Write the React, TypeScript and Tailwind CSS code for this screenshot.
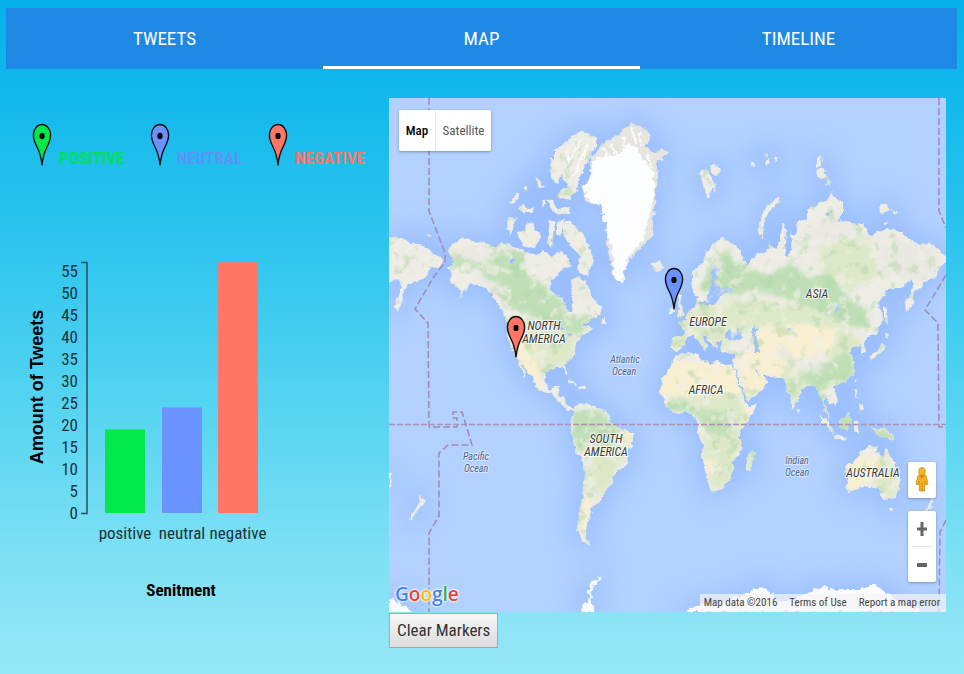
import React, { useState } from "react";

const condensed = "font-['Roboto_Condensed','Liberation_Sans_Narrow',Roboto,sans-serif]";

const LAND = [
  // North and Central America
  "M448 250 L454 243 L463 237 L472 241 L482 242 L493 247 L503 242 L510 246 L518 248 L528 253 L535 255 L542 250 L552 257 L557 252 L562 250 L568 258 L563 270 L552 280 L551 290 L557 296 L562 298 L565 305 L568 310 L572 313 L573 306 L571 298 L572 290 L571 279 L578 277 L587 282 L589 290 L592 297 L598 303 L603 310 L600 315 L590 320 L583 325 L592 328 L590 332 L580 337 L575 347 L576 353 L571 358 L565 365 L566 370 L568 375 L565 373 L563 367 L555 367 L547 372 L545 382 L550 390 L555 385 L560 385 L557 395 L565 397 L567 405 L572 408 L577 407 L583 403 L577 411 L568 410 L560 403 L552 394 L545 391 L535 387 L532 377 L526 370 L520 362 L523 369 L527 378 L522 372 L518 360 L515 357 L510 345 L507 333 L508 323 L503 312 L497 302 L493 295 L485 288 L472 283 L465 290 L453 302 L463 293 L457 287 L450 280 L453 273 L447 268 L453 262Z",
  "M600 320 L604 318 L607 324 L601 324Z M568 380 L577 384 L575 386 L568 382Z M579 386 L585 387 L584 390 L579 389Z",
  // South America
  "M575 405 L585 403 L597 407 L607 412 L612 422 L620 428 L633 433 L633 442 L628 452 L627 460 L625 467 L617 470 L612 482 L605 492 L603 498 L597 505 L590 508 L593 513 L587 523 L585 535 L590 545 L583 542 L577 530 L578 517 L582 500 L584 473 L582 457 L577 455 L572 437 L570 423 L573 413Z",
  // Arctic islands
  "M583 131 L596 138 L595 148 L587 163 L580 177 L577 190 L570 200 L558 197 L561 190 L567 187 L562 173 L559 185 L551 178 L550 157 L555 160 L555 150 L565 142 L573 134Z",
  "M517 233 L525 231 L526 225 L532 223 L536 230 L540 237 L535 248 L522 245Z M508 217 L518 218 L513 227 L511 235 L507 230Z",
  "M510 203 L514 196 L519 193 L518 199 L513 205Z M518 208 L524 204 L526 208 L534 207 L532 213 L523 213Z M535 177 L541 181 L545 187 L540 188Z M524 187 L528 185 L528 192 L524 191Z M546 198 L553 202 L557 209 L570 207 L569 214 L553 213Z M550 220 L555 219 L553 236 L551 249 L547 243Z M557 221 L564 220 L561 237 L557 234Z M541 200 L545 202 L543 208Z",
  "M562 222 L570 222 L582 233 L588 245 L595 260 L587 277 L577 270 L580 257 L570 245 L564 235Z M562 262 L568 258 L572 266 L565 268Z",
  // Iceland, Svalbard, Novaya Zemlya and the high Arctic
  "M652 263 L660 262 L664 267 L658 272 L653 269Z",
  "M700 172 L707 170 L711 178 L715 184 L708 198 L704 189Z M710 165 L716 164 L722 170 L716 176 L711 173Z M714 186 L717 192 L714 193Z",
  "M780 197 L777 204 L770 210 L764 221 L763 237 L758 235 L760 220 L765 208 L773 201Z",
  "M750 163 L755 160 L754 167Z M763 153 L768 152 L766 158Z M764 161 L769 159 L771 163 L765 165Z M774 158 L778 157 L775 163Z",
  "M816 158 L821 156 L822 166 L816 167Z M815 170 L824 168 L826 179 L819 180Z M827 177 L832 183 L830 187 L825 186Z M879 205 L888 205 L889 211 L880 213Z M891 209 L897 211 L894 214Z M884 221 L888 223 L884 224Z",
  // British Isles
  "M677 295 L682 296 L680 302 L685 313 L684 316 L676 317 L679 309Z M670 308 L674 306 L674 313 L669 313Z",
  // Eurasia
  "M672 337 L682 336 L685 332 L678 322 L685 320 L688 312 L695 308 L697 297 L692 289 L691 280 L693 273 L703 262 L706 252 L712 244 L723 238 L737 247 L743 257 L746 266 L752 260 L758 253 L767 250 L770 243 L777 250 L780 237 L783 223 L787 230 L786 246 L784 255 L788 257 L792 250 L790 233 L796 235 L798 222 L808 220 L808 210 L818 204 L827 200 L832 192 L835 198 L843 202 L843 215 L837 222 L848 221 L857 225 L863 223 L870 237 L883 230 L893 228 L908 238 L920 245 L930 243 L943 253 L947 257 L947 263 L938 267 L937 275 L923 283 L915 293 L913 303 L907 313 L905 303 L913 287 L912 278 L903 288 L887 290 L877 305 L882 308 L883 320 L875 335 L867 337 L865 343 L867 353 L862 355 L860 345 L853 347 L850 353 L855 362 L855 372 L848 380 L838 385 L832 385 L838 397 L835 407 L828 400 L825 395 L825 405 L830 420 L825 412 L823 403 L820 395 L813 385 L803 388 L797 402 L793 409 L788 393 L787 385 L782 378 L771 377 L761 375 L753 366 L757 373 L763 377 L768 381 L761 392 L748 401 L742 388 L736 371 L733 365 L734 353 L723 352 L719 347 L722 341 L716 342 L717 350 L710 342 L705 335 L700 333 L707 345 L705 351 L698 340 L693 335 L687 337 L682 348 L675 352 L671 348Z",
  // Africa and Madagascar
  "M677 355 L688 353 L698 353 L700 360 L710 364 L717 361 L727 365 L733 366 L740 387 L745 402 L748 407 L757 403 L753 413 L743 427 L739 437 L742 450 L733 462 L733 472 L728 482 L723 488 L712 492 L705 470 L701 457 L703 447 L698 433 L698 423 L692 413 L684 412 L677 415 L667 408 L660 393 L662 380 L670 367Z",
  "M753 449 L755 454 L750 471 L746 470 L746 459Z",
  // Japan and south-east Asia
  "M884 307 L887 309 L888 325 L884 320Z M884 332 L890 335 L885 339Z M882 342 L885 344 L882 353 L872 358 L870 362 L868 358 L879 350Z M854 378 L857 380 L855 383Z",
  "M855 390 L858 391 L857 399 L855 397Z M858 404 L863 405 L861 411Z M849 412 L852 419 L847 430 L840 427 L839 421Z M819 414 L825 419 L833 429 L834 435 L828 430Z M835 435 L846 438 L845 440 L835 438Z M854 422 L860 423 L857 427 L858 433 L854 432Z M870 426 L877 428 L885 428 L896 439 L882 438Z M797 408 L800 411 L798 414Z",
  // Australia and New Zealand
  "M845 467 L857 458 L860 452 L868 447 L877 448 L877 453 L883 457 L886 446 L890 457 L898 467 L901 483 L895 498 L885 500 L878 490 L872 487 L860 488 L848 493Z M889 507 L894 507 L892 512Z M932 497 L935 500 L931 506 L924 515 L922 513 L929 506Z",
  "M420 494 L425 501 L417 512 L411 521 L409 518 L418 506Z M388 472 L391 475 L390 486 L388 487Z",
  // Eastern Siberia, repeated over the date line
  "M388 237 L398 238 L412 243 L425 245 L432 252 L443 260 L438 268 L431 267 L427 277 L418 281 L410 283 L405 290 L402 303 L397 313 L394 307 L402 287 L398 278 L388 283Z M427 235 L432 234 L430 238Z",
].join(" ");

const ICE = "M597 158 L608 156 L618 154 L628 144 L641 152 L646 163 L654 174 L654 190 L652 204 L648 222 L643 240 L636 249 L627 261 L621 284 L614 277 L612 250 L605 223 L602 205 L590 200 L583 188 L590 179 L591 166Z";
const GREENLAND = "M597 150 L603 143 L612 140 L620 132 L632 123 L645 128 L651 140 L645 145 L653 152 L663 148 L667 153 L658 162 L657 173 L656 190 L655 207 L653 223 L652 238 L638 250 L627 263 L622 284 L613 277 L612 267 L608 250 L606 223 L602 205 L587 202 L582 187 L590 177 L590 160Z";
const ANTARCTICA =
  "M685 612 L695 606 L715 604 L735 598 L750 592 L760 586 L770 592 L778 601 L795 600 L810 590 L823 587 L840 590 L853 590 L865 588 L875 585 L885 591 L893 597 L905 605 L925 612Z M388 597 L395 600 L402 605 L412 612 L388 612Z M603 576 L596 582 L592 590 L590 600 L595 612 L582 612 L583 601 L588 604 L589 589 L594 579Z M938 612 L946 608 L946 612Z";

const INLAND_WATER =
  "M714 264 L720 268 L716 278 L719 287 L733 288 L733 291 L722 293 L717 303 L702 306 L699 301 L706 302 L710 290 L711 277Z M725 339 L728 329 L734 332 L738 329 L743 338 L734 341Z M752 329 L758 327 L756 335 L760 352 L754 352Z M834 310 L838 303 L839 306 L834 315Z M508 259 L514 257 L516 261 L510 264Z M556 323 L562 326 L566 331 L558 329Z M568 333 L574 334 L569 337Z M788 329 L792 328 L789 332Z M825 212 L832 211 L826 217Z M703 396 L706 398 L703 400Z M729 424 L733 424 L731 428Z";

const GREEN =
  "M450 250 L470 262 L492 262 L505 246 L522 255 L530 276 L560 296 L566 318 L595 316 L580 336 L545 322 L515 310 L495 292 L480 268 L458 265Z M572 410 L600 410 L618 428 L610 446 L588 440 L580 452 L572 437Z M700 290 L712 262 L728 248 L736 265 L750 268 L770 275 L790 262 L810 278 L830 272 L850 300 L868 310 L870 330 L845 325 L820 312 L790 300 L760 292 L725 295Z M695 410 L730 412 L732 436 L706 434Z M666 402 L688 401 L695 412 L668 411Z M848 352 L858 362 L852 380 L836 384 L820 392 L832 408 L826 416 L810 383 L800 380 L792 402 L788 382Z M838 412 L856 412 L850 434 L838 430Z M865 422 L900 438 L885 442Z M580 463 L587 470 L584 520 L576 530Z";
const PALE =
  "M505 318 L540 318 L575 334 L570 362 L545 372 L522 368 L510 345Z M600 440 L632 434 L622 466 L598 500 L588 480 L592 455Z M672 318 L700 306 L740 298 L800 305 L850 330 L862 345 L850 365 L800 345 L755 325 L722 350 L672 350Z M665 393 L745 395 L752 410 L740 430 L742 455 L728 485 L712 488 L702 455 L705 425Z M880 452 L902 480 L890 500 L872 482Z M770 380 L790 360 L812 375 L797 402Z M820 245 L868 235 L878 275 L850 290 L820 275Z M745 452 L757 450 L748 474Z";
const SAND =
  "M665 362 L730 362 L745 393 L700 397 L660 395Z M736 355 L760 350 L785 372 L765 395 L748 400Z M756 330 L800 322 L838 330 L830 352 L800 358 L770 372 L752 355Z M513 340 L535 345 L540 384 L524 374Z M745 405 L758 402 L744 428Z M583 490 L592 505 L588 535 L580 528Z M703 460 L715 458 L712 480Z M850 460 L880 456 L885 475 L860 484 L848 490Z M622 430 L632 432 L628 445Z M530 386 L545 388 L538 380Z";
const GREY =
  "M454 244 L500 250 L480 258 L455 254Z M470 272 L500 284 L510 310 L500 305Z M786 248 L850 205 L850 235 L815 250Z M780 342 L800 365 L818 366 L822 372 L800 370 L778 355Z M878 235 L940 250 L925 280 L880 275Z M560 270 L590 280 L590 300 L572 302Z";

function Pin({ x, y, color }: { x: number; y: number; color: string }) {
  return (
    <g transform={`translate(${x} ${y})`}>
      <path
        d="M0 0C-.8-8-2.4-13-5-18C-7-22-8.6-25-8.6-30A8.6 10.5 0 0 1 8.6-30C8.6-25 7-22 5-18C2.4-13 .8-8 0 0Z"
        fill={color}
        stroke="#111"
        strokeWidth="1.4"
        strokeLinejoin="round"
      />
      <ellipse cx="0" cy="-29" rx="2.6" ry="3.2" fill="#000" />
    </g>
  );
}

function WorldMap() {
  return (
    <svg
      viewBox="389 98 557 514"
      preserveAspectRatio="xMidYMid slice"
      className={`block h-full w-full ${condensed}`}
      role="img"
      aria-label="World map"
    >
      <defs>
        <clipPath id="land-clip">
          <path d={LAND} />
        </clipPath>
        <filter id="coast" x="389" y="98" width="557" height="514" filterUnits="userSpaceOnUse" colorInterpolationFilters="sRGB">
          <feTurbulence type="fractalNoise" baseFrequency="0.16" numOctaves="3" seed="4" result="n" />
          <feDisplacementMap in="SourceGraphic" in2="n" scale="6" xChannelSelector="R" yChannelSelector="G" result="d" />
          <feTurbulence type="fractalNoise" baseFrequency="0.08" numOctaves="5" seed="11" result="t" />
          <feColorMatrix in="t" values="0 0 0 0 .95  0 0 0 0 .94  0 0 0 0 .9  6 0 0 0 -3.3" result="pale" />
          <feColorMatrix in="t" values="0 0 0 0 .7  0 0 0 0 .84  0 0 0 0 .66  0 6 0 0 -3.4" result="leaf" />
          <feComponentTransfer in="leaf" result="leafSoft">
            <feFuncA type="linear" slope="0.5" />
          </feComponentTransfer>
          <feComposite in="leafSoft" in2="d" operator="atop" result="a" />
          <feComposite in="pale" in2="d" operator="in" result="b" />
          <feComponentTransfer in="b" result="b2">
            <feFuncA type="linear" slope="0.6" />
          </feComponentTransfer>
          <feMerge>
            <feMergeNode in="a" />
            <feMergeNode in="b2" />
          </feMerge>
        </filter>
        <filter id="ice" x="389" y="98" width="557" height="514" filterUnits="userSpaceOnUse" colorInterpolationFilters="sRGB">
          <feTurbulence type="fractalNoise" baseFrequency="0.18" numOctaves="2" seed="8" result="n" />
          <feDisplacementMap in="SourceGraphic" in2="n" scale="8" xChannelSelector="R" yChannelSelector="G" />
        </filter>
        <filter id="shelf" x="340" y="50" width="660" height="620" filterUnits="userSpaceOnUse" colorInterpolationFilters="sRGB">
          <feGaussianBlur stdDeviation="13" />
        </filter>
        <filter id="soft" colorInterpolationFilters="sRGB">
          <feGaussianBlur stdDeviation="2" />
        </filter>
      </defs>
      <rect x="0" y="0" width="1400" height="800" fill="#b2d1ff" />
      <g filter="url(#shelf)" fill="#8fb5fe" stroke="#8fb5fe" strokeWidth="12" opacity=".7">
        <path d={LAND} />
        <path d={GREENLAND} />
        <path d={ANTARCTICA} />
      </g>
      <g filter="url(#coast)">
        <path d={LAND} fill="#edece5" />
        <g clipPath="url(#land-clip)">
          <g filter="url(#soft)">
            <path d={PALE} fill="#dde8c8" />
            <path d={GREEN} fill="#c0dfb7" />
            <path d={SAND} fill="#f8efd0" />
            <path d={GREY} fill="#e9e8e1" />
          </g>
          <path d={INLAND_WATER} fill="#9dc0ff" />
        </g>
      </g>
      <g filter="url(#ice)">
        <path d={GREENLAND} fill="#e6e5df" />
        <path d={ICE} fill="#fcfdfe" />
        <path d={ANTARCTICA} fill="#fbfcfe" />
        <path
          d="M603 147L607 156M612 143L614 153M622 136L626 148M632 128L636 144M640 131L641 146M648 155L652 170M582 138L570 160M588 142L575 175M566 150L570 165"
          fill="none"
          stroke="#fafaf8"
          strokeWidth="2.5"
        />
      </g>
      <g fill="none" stroke="#a08bb2" strokeWidth="1.5">
        <path
          strokeDasharray="7 3"
          d="M429 98V211L445 253V262L433 278L415 309L428 323L429 427H457V418H453V412H462L472 445H448L439 453V516L429 533V612M939 98V211L946 228M946 275L925 310L938 323L939 427H946M946 520L940 532L939 612"
        />
        <path strokeDasharray="6 2" stroke="#ab93b0" d="M389 424.5H946" />
      </g>
      <g
        textAnchor="middle"
        fontStyle="italic"
        paintOrder="stroke"
        stroke="#fff"
        strokeOpacity=".75"
        strokeWidth="2"
        fill="#3a3a3a"
        className="text-[12px]"
      >
        <text x="544" y="330">NORTH</text>
        <text x="544" y="343">AMERICA</text>
        <text x="708" y="326">EUROPE</text>
        <text x="817" y="298">ASIA</text>
        <text x="706" y="394">AFRICA</text>
        <text x="606" y="443">SOUTH</text>
        <text x="606" y="456">AMERICA</text>
        <text x="873" y="477">AUSTRALIA</text>
      </g>
      <g
        textAnchor="middle"
        fontStyle="italic"
        paintOrder="stroke"
        stroke="#d5e5ff"
        strokeWidth="2"
        fill="#50658c"
        className="text-[10px]"
      >
        <text x="625" y="363">Atlantic</text>
        <text x="624" y="375">Ocean</text>
        <text x="476" y="460">Pacific</text>
        <text x="476" y="472">Ocean</text>
        <text x="797" y="464">Indian</text>
        <text x="797" y="476">Ocean</text>
      </g>
      <Pin x={516} y={357} color="#ff7566" />
      <Pin x={674} y={309} color="#6b93ff" />
    </svg>
  );
}

function MapPanel() {
  return (
    <div className="relative h-[514px] overflow-hidden">
      <WorldMap />
      <div className="absolute left-[10px] top-[12px] flex h-[41px] rounded-xs bg-white text-[13px] shadow-[0_1px_3px_rgba(0,0,0,0.3)]">
        <button className="w-[37px] border-r border-gray-200 font-medium text-black">Map</button>
        <button className="w-[55px] text-[#565656]">Satellite</button>
      </div>
      <button
        aria-label="Street View"
        className="absolute right-[10px] top-[364px] flex h-[36px] w-[28px] items-center justify-center rounded-xs bg-white shadow-[0_1px_3px_rgba(0,0,0,0.3)]"
      >
        <svg width="14" height="28" viewBox="0 0 14 28" aria-hidden="true">
          <path d="M3 9.500Q7 7.500 11 9.500L13 18L11 19L10 15L9.500 25H4.500L4 15L3 19L1 18Z" fill="#f5b021" stroke="#cf8a13" strokeWidth=".8" />
          <ellipse cx="7" cy="5.500" rx="3.300" ry="4" fill="#f9b824" stroke="#cf8a13" strokeWidth=".8" />
          <path d="M4.500 9.500L7 12.500L9.500 9.500Z" fill="#e8711c" />
          <path d="M7 17V25" stroke="#cf8a13" strokeWidth="1" />
        </svg>
      </button>
      <div className="absolute right-[10px] top-[413px] flex w-[28px] flex-col items-center rounded-xs bg-white shadow-[0_1px_3px_rgba(0,0,0,0.3)]">
        <button aria-label="Zoom in" className="flex h-[35px] w-full items-center justify-center">
          <svg width="12" height="14" viewBox="0 0 12 14" aria-hidden="true">
            <path d="M6 0V14M1 7H11" stroke="#666" strokeWidth="3" />
          </svg>
        </button>
        <div className="h-px w-[20px] bg-[#e6e6e6]" />
        <button aria-label="Zoom out" className="flex h-[35px] w-full items-center justify-center">
          <svg width="12" height="14" viewBox="0 0 12 14" aria-hidden="true">
            <path d="M1 7H11" stroke="#666" strokeWidth="4" />
          </svg>
        </button>
      </div>
      <div
        className="absolute bottom-[4px] left-[6px] font-['Open_Sans',sans-serif] text-[19px] leading-7 font-semibold [text-shadow:0_0_2px_#fff,0_0_2px_#fff,0_0_3px_#fff]"
        aria-label="Google"
      >
        <span className="text-[#4285f4]">G</span>
        <span className="text-[#ea4335]">o</span>
        <span className="text-[#fbbc05]">o</span>
        <span className="text-[#4285f4]">g</span>
        <span className="text-[#34a853]">l</span>
        <span className="text-[#ea4335]">e</span>
      </div>
      <div className="absolute bottom-0 right-0 flex h-[18px] items-center gap-3 bg-[#f5f5f5]/70 pl-1 pr-[6px] text-[11px] whitespace-nowrap text-[#444]">
        <span>Map data ©2016</span>
        <a href="#terms">Terms of Use</a>
        <a href="#report">Report a map error</a>
      </div>
    </div>
  );
}

const LEGEND = [
  { label: "POSITIVE", color: "#00e84a", text: "text-[#00e05c]" },
  { label: "NEUTRAL", color: "#6b93ff", text: "text-[#5b93f7]" },
  { label: "NEGATIVE", color: "#ff7566", text: "text-[#ff7566]" },
];

const BARS = [
  { label: "positive", value: 19, color: "#00e84a" },
  { label: "neutral", value: 24, color: "#6b93ff" },
  { label: "negative", value: 57, color: "#ff7566" },
];

function Chart() {
  const base = 273;
  const unit = 4.4;
  const barLeft = (i: number) => Math.round(85 + i * 56.6);
  const ticks = [0, 5, 10, 15, 20, 25, 30, 35, 40, 45, 50, 55];
  return (
    <svg width="270" height="370" viewBox="0 0 270 370" className="block text-[17px]" role="img" aria-label="Tweets by sentiment">
      <text transform="translate(23 147) rotate(-90)" textAnchor="middle" className="font-['Liberation_Sans',Arial,sans-serif] text-[18px] font-bold">
        Amount of Tweets
      </text>
      <g className={condensed} fill="#1c3238">
        {ticks.map((t) => (
          <text key={t} x="58" y={base + 6 - t * unit} textAnchor="end">
            {t}
          </text>
        ))}
        {BARS.map((b, i) => (
          <text key={b.label} x={barLeft(i) + 20} y="299" textAnchor="middle">
            {b.label}
          </text>
        ))}
      </g>
      <path d="M61 22.500H67V273.500H61" fill="none" stroke="#27505c" strokeWidth="1.500" />
      {BARS.map((b, i) => (
        <rect key={b.label} x={barLeft(i)} y={base - b.value * unit} width="40" height={b.value * unit} fill={b.color} />
      ))}
      <text x="161" y="356" textAnchor="middle" className={`font-bold ${condensed}`}>
        Senitment
      </text>
    </svg>
  );
}

export default function App() {
  const tabs = ["TWEETS", "MAP", "TIMELINE"];
  const [active, setActive] = useState("MAP");
  return (
    <div
      className={`min-h-screen bg-[linear-gradient(to_bottom,#05b1ea_0%,#14b9ec_15%,#2cc4ee_35%,#55d4f1_60%,#80e1f4_84%,#96e7f6_100%)] pt-2 ${condensed}`}
    >
      <nav className="mr-[7px] ml-[6px] flex h-[61px] bg-[#1e88e5]">
        {tabs.map((t) => (
          <button
            key={t}
            onClick={() => setActive(t)}
            className={
              t === active
                ? "flex-1 border-b-3 border-b-white pt-1 text-[19px] text-white"
                : "flex-1 border-b-3 border-transparent pt-1 text-[19px] text-white"
            }
          >
            {t}
          </button>
        ))}
      </nav>
      <main className="flex pt-[29px] pr-[18px]">
        <section className="w-[389px] shrink-0 pt-[25px]">
          <ul className="flex pl-[32px]">
            {LEGEND.map((l) => (
              <li key={l.label} className="flex w-[118px] shrink-0 items-end gap-[7px]">
                <svg width="20" height="43" viewBox="-10 -42 20 43" aria-hidden="true">
                  <Pin x={0} y={0} color={l.color} />
                </svg>
                <span className={`text-[17px] leading-4 font-bold ${l.text}`}>{l.label}</span>
              </li>
            ))}
          </ul>
          <div className="pt-[74px] pl-5">
            <Chart />
          </div>
        </section>
        <section className="min-w-0 flex-1">
          <MapPanel />
          <button className="mt-px h-[35px] border border-[#a9a9a9] bg-linear-to-b from-[#f6f6f6] to-[#dddddd] px-[7px] text-[17px] text-[#333]">
            Clear Markers
          </button>
        </section>
      </main>
    </div>
  );
}
